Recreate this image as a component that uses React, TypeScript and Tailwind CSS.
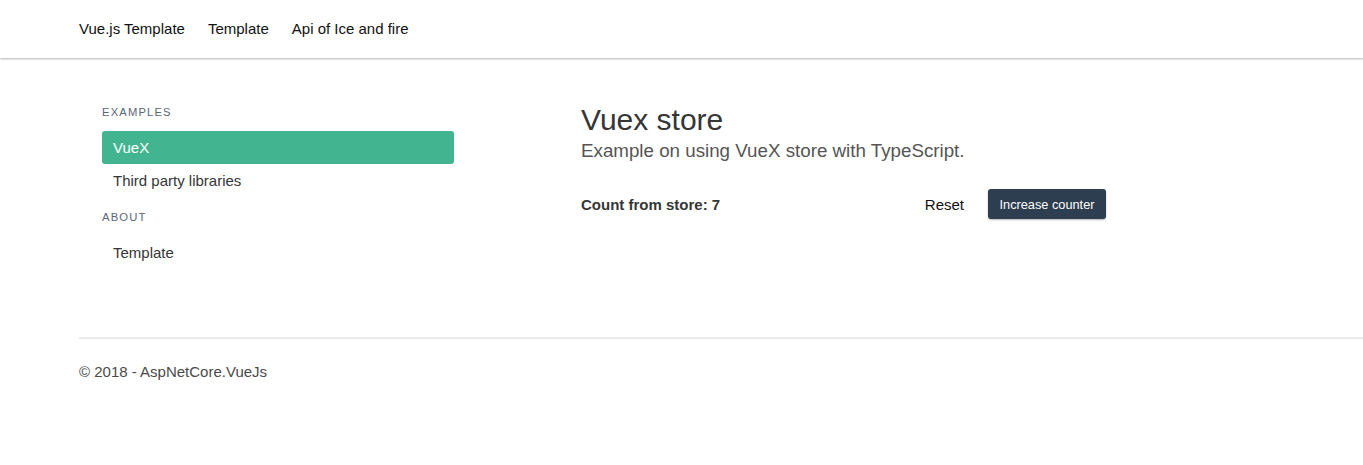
import { useState } from "react";

const font = { fontFamily: '"Liberation Sans", Arial, Helvetica, sans-serif' };

function MenuLabel({ children }: { children: string }) {
  return (
    <p className="mb-[10px] text-[11.25px] uppercase leading-[1.5] tracking-[0.1em] text-[#5b6677]">
      {children}
    </p>
  );
}

function MenuItem({ label, active }: { label: string; active?: boolean }) {
  return (
    <li>
      <a
        className={
          active
            ? "block h-[33px] rounded-[3px] bg-[#42b590] px-[11px] text-[15px] leading-[33px] text-white"
            : "block h-[33px] rounded-[3px] px-[11px] text-[15px] leading-[33px] text-[#363636]"
        }
      >
        {label}
      </a>
    </li>
  );
}

export default function App() {
  const [count, setCount] = useState(7);

  return (
    <div className="min-h-[465px] bg-white" style={font}>
      <nav className="relative z-10 h-[58px] bg-white shadow-[0_1px_2px_rgba(0,0,0,0.3)]">
        <div className="flex h-full items-center gap-[23px] pl-[79px] text-[15px] text-[#111]">
          <a>Vue.js Template</a>
          <a>Template</a>
          <a>Api of Ice and fire</a>
        </div>
      </nav>

      <div className="flex pt-[46px]">
        <aside className="ml-[102px] w-[352px]">
          <MenuLabel>Examples</MenuLabel>
          <ul className="mb-[12px]">
            <MenuItem label="VueX" active />
            <MenuItem label="Third party libraries" />
          </ul>
          <MenuLabel>About</MenuLabel>
          <ul>
            <MenuItem label="Template" />
          </ul>
        </aside>

        <main className="ml-[127px] w-[525px]">
          <h1 className="-mt-[1px] text-[30px] leading-[1.125] text-[#363636]">Vuex store</h1>
          <h2 className="mt-[2px] text-[18.75px] leading-[1.25] text-[#555]">
            Example on using VueX store with TypeScript.
          </h2>
          <div className="mt-[26px] flex h-[32px] items-center">
            <p className="flex-1 pt-[2px] text-[15px] font-bold text-[#363636]">Count from store: {count}</p>
            <button
              type="button"
              onClick={() => setCount(0)}
              className="mr-[24px] pt-[2px] text-[15px] text-[#111]"
            >
              Reset
            </button>
            <button
              type="button"
              onClick={() => setCount((c) => c + 1)}
              className="h-[30px] w-[118px] rounded-[3px] bg-[#2c3e50] text-[12.75px] text-white shadow-[0_1px_2px_rgba(0,0,0,0.3)]"
            >
              Increase counter
            </button>
          </div>
        </main>
      </div>

      <footer className="ml-[79px] mt-[68px]">
        <div className="h-[2px] bg-[#e9eceb]" />
        <p className="pt-[22px] text-[15px] text-[#4a4a4a]">© 2018 - AspNetCore.VueJs</p>
      </footer>
    </div>
  );
}
